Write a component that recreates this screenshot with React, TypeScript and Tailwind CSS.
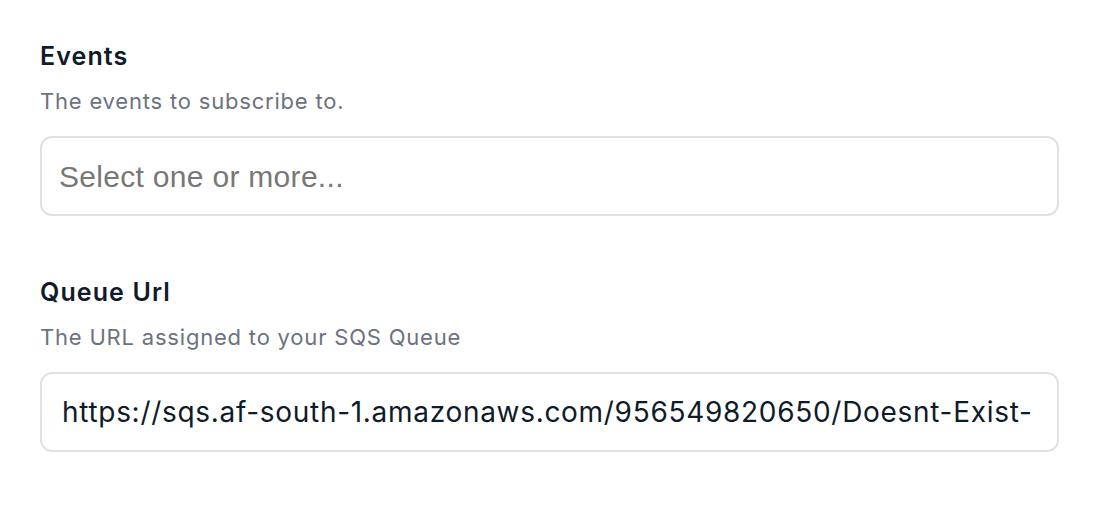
import React from "react";

function Field({
  label,
  help,
  children,
}: {
  label: string;
  help: string;
  children: React.ReactNode;
}) {
  return (
    <div className="flex flex-col">
      <label className="text-[25px] leading-[36px] font-semibold tracking-[1.1px] text-[#0f1a2a]">
        {label}
      </label>
      <p className="mt-[12px] text-[22px] leading-[30px] tracking-[0.8px] text-[#6b7280]">{help}</p>
      <div className="mt-[20px]">{children}</div>
    </div>
  );
}

export default function App() {
  return (
    <div className="min-h-screen w-[1099px] bg-white px-[40px] pt-[38px] font-['Inter',sans-serif]">
      <div className="flex w-[1019px] flex-col gap-[58px]">
        <Field label="Events" help="The events to subscribe to.">
          <div className="flex h-[80px] items-center rounded-[12px] border-2 border-[#e1e1e1] px-[17px]">
            <span className="font-['Liberation_Sans',sans-serif] text-[30px] tracking-[0.3px] text-[#777777]">
              Select one or more...
            </span>
          </div>
        </Field>
        <Field label="Queue Url" help="The URL assigned to your SQS Queue">
          <div className="flex h-[80px] items-center overflow-hidden rounded-[12px] border-2 border-[#e1e1e1] px-[20px]">
            <span className="whitespace-nowrap text-[28px] tracking-[0.7px] text-[#0f1a2a]">
              https://sqs.af-south-1.amazonaws.com/956549820650/Doesnt-Exist-
            </span>
          </div>
        </Field>
      </div>
    </div>
  );
}
